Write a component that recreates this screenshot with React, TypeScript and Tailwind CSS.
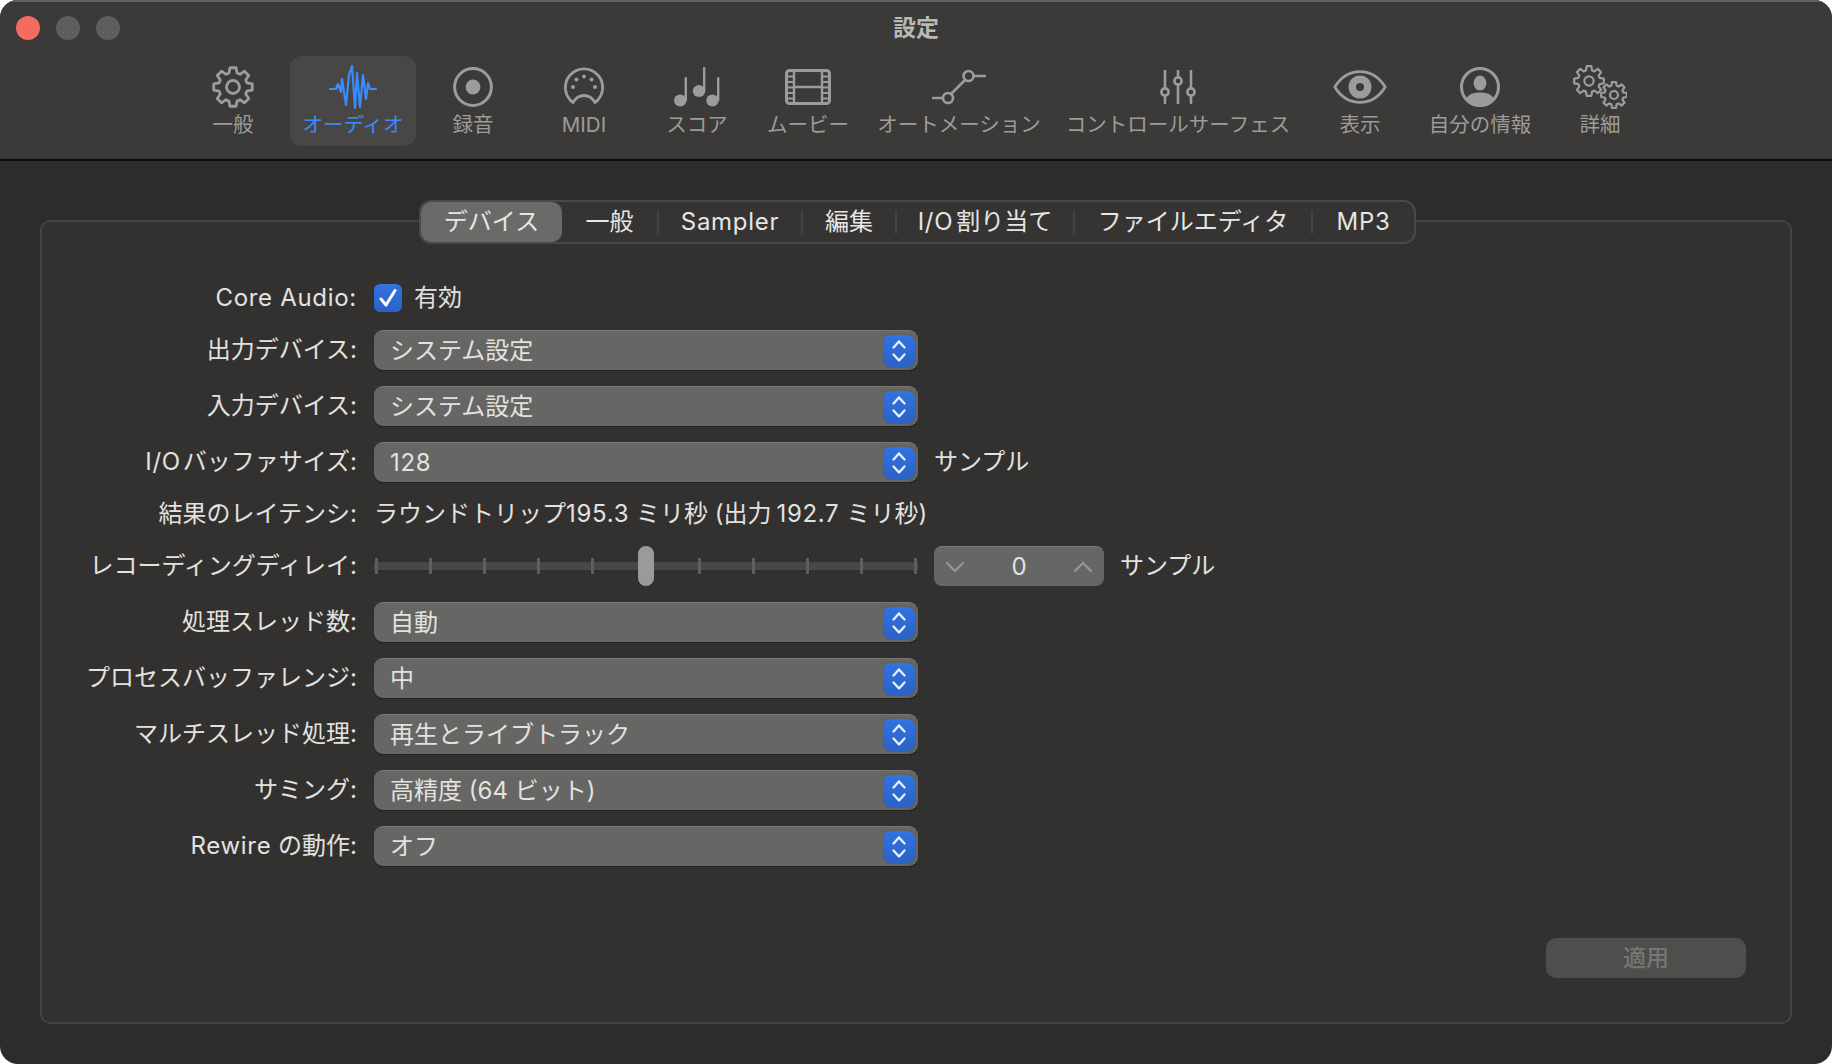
import * as React from "react";

const TOOLBAR_ITEMS = [
  { label: "一般", width: "w-[114px]", icon: <GearIcon /> },
  { label: "オーディオ", width: "w-[126px]", icon: <WaveIcon />, active: true },
  { label: "録音", width: "w-[114px]", icon: <RecordIcon /> },
  { label: "MIDI", width: "w-[108px]", icon: <MidiIcon /> },
  { label: "スコア", width: "w-[118px]", icon: <ScoreIcon /> },
  { label: "ムービー", width: "w-[104px]", icon: <FilmIcon /> },
  { label: "オートメーション", width: "w-[198px]", icon: <AutomationIcon /> },
  { label: "コントロールサーフェス", width: "w-[240px]", icon: <SlidersIcon /> },
  { label: "表示", width: "w-[124px]", icon: <EyeIcon /> },
  { label: "自分の情報", width: "w-[116px]", icon: <UserIcon /> },
  { label: "詳細", width: "w-[124px]", icon: <GearsIcon /> },
];

const TABS = [
  { label: "デバイス", width: "w-[141px] rounded-[10px] bg-[#6a6a68]" },
  { label: "一般", width: "w-[95px]" },
  { label: <Latin>Sampler</Latin>, width: "w-[142px]" },
  { label: "編集", width: "w-[92px]" },
  { label: <><Latin>I/O</Latin><span className="ml-[3px]">割り当て</span></>, width: "w-[176px]" },
  { label: "ファイルエディタ", width: "w-[236px]" },
  { label: <Latin>MP3</Latin>, width: "flex-1" },
];

const TICKS = [0, 1, 2, 3, 4, 5, 6, 7, 8, 9, 10];

// Inter runs a little narrower than the system font in the picture.
function Latin({ children }: { children: React.ReactNode }) {
  return <span className="tracking-[0.7px]">{children}</span>;
}

// Builds a toothed outline around a centre; the macOS gears are all this shape.
function gearPath(cx: number, cy: number, outer: number, inner: number, teeth = 8) {
  const step = (Math.PI * 2) / teeth;
  const pts: string[] = [];
  for (let i = 0; i < teeth; i++) {
    const a = i * step - Math.PI / 2;
    const spots: [number, number][] = [
      [inner, a - step * 0.36],
      [outer, a - step * 0.2],
      [outer, a + step * 0.2],
      [inner, a + step * 0.36],
    ];
    for (const [r, t] of spots) {
      pts.push(`${(cx + Math.cos(t) * r).toFixed(2)} ${(cy + Math.sin(t) * r).toFixed(2)}`);
    }
  }
  return `M${pts.join("L")}Z`;
}

function GearIcon() {
  return (
    <svg viewBox="0 0 42 42" className="h-[42px] w-[42px]" fill="none" stroke="#9c9c9a" strokeWidth="2.8" strokeLinejoin="round">
      <path d={gearPath(21, 21, 19.5, 14.5)} />
      <circle cx="21" cy="21" r="6.5" />
    </svg>
  );
}

function WaveIcon() {
  return (
    <svg viewBox="0 0 48 44" className="h-[44px] w-[48px]" fill="none" stroke="#3a8bfb" strokeWidth="2.2" strokeLinejoin="round" strokeLinecap="round">
      <polyline points="1,24 7,24 9,19 12,27 13,14 17,40 20,10 23,1 26,43 28,8 31,42 34,10 37,34 39,18 41,24 47,24" />
    </svg>
  );
}

function RecordIcon() {
  return (
    <svg viewBox="0 0 40 40" className="h-[40px] w-[40px]">
      <circle cx="20" cy="20" r="18.4" fill="none" stroke="#9c9c9a" strokeWidth="3" />
      <circle cx="20" cy="20" r="7.4" fill="#9c9c9a" />
    </svg>
  );
}

function MidiIcon() {
  return (
    <svg viewBox="0 0 40 40" className="h-[40px] w-[40px]" fill="#9c9c9a">
      <path
        d="M9 35.5A18.6 18.6 0 1 1 31 35.5C29 32 26 28.5 20 28.5C14 28.5 11 32 9 35.5Z"
        fill="none"
        stroke="#9c9c9a"
        strokeWidth="2.8"
        strokeLinejoin="round"
      />
      <circle cx="9" cy="20" r="2" />
      <circle cx="12.5" cy="12.5" r="2" />
      <circle cx="20" cy="9.5" r="2" />
      <circle cx="27.5" cy="12.5" r="2" />
      <circle cx="31" cy="20" r="2" />
    </svg>
  );
}

function ScoreIcon() {
  return (
    <svg viewBox="0 0 46 40" className="h-[40px] w-[46px]" fill="#9c9c9a">
      <ellipse cx="6.2" cy="33.5" rx="6.2" ry="6" />
      <rect x="10.6" y="10" width="2.4" height="24" rx="1" />
      <ellipse cx="25" cy="24" rx="6.2" ry="6" />
      <rect x="29" y="0" width="2.4" height="25" rx="1" />
      <ellipse cx="38.5" cy="33.5" rx="6.2" ry="6" />
      <rect x="43" y="10" width="2.4" height="24" rx="1" />
    </svg>
  );
}

function FilmIcon() {
  return (
    <svg viewBox="0 0 46 36" className="h-[36px] w-[46px]" fill="none" stroke="#9c9c9a">
      <rect x="1.5" y="1.5" width="43" height="33" rx="3" strokeWidth="3" />
      <path d="M9 1.5V34.5M37 1.5V34.5M9 18H37" strokeWidth="2.4" />
      <path d="M2 7.5H9M2 13H9M2 18.5H9M2 24H9M2 29.5H9M37 7.5H44M37 13H44M37 18.5H44M37 24H44M37 29.5H44" strokeWidth="2" />
    </svg>
  );
}

function AutomationIcon() {
  return (
    <svg viewBox="0 0 54 36" className="h-[36px] w-[54px]" fill="none" stroke="#9c9c9a" strokeWidth="2.6" strokeLinecap="round">
      <path d="M1 29H11M19 25L33 11M42 7H53" />
      <circle cx="16" cy="29" r="5" />
      <circle cx="36.5" cy="7" r="5" />
    </svg>
  );
}

function SlidersIcon() {
  return (
    <svg viewBox="0 0 36 34" className="h-[34px] w-[36px]" fill="#3b3a38" stroke="#9c9c9a" strokeWidth="2.6" strokeLinecap="round">
      <path d="M5 1V33M18 1V33M31 1V33" />
      <circle cx="5" cy="22" r="3.6" />
      <circle cx="18" cy="11" r="3.6" />
      <circle cx="31" cy="22" r="3.6" />
    </svg>
  );
}

function EyeIcon() {
  return (
    <svg viewBox="0 0 54 34" className="h-[34px] w-[54px]">
      <path d="M1.8 17C8 7 17 1.6 27 1.6S46 7 52.2 17C46 27 37 32.4 27 32.4S8 27 1.8 17Z" fill="none" stroke="#9c9c9a" strokeWidth="2.8" strokeLinejoin="round" />
      <circle cx="27" cy="17" r="11.5" fill="#9c9c9a" />
      <circle cx="27" cy="17" r="4" fill="#3b3a38" />
    </svg>
  );
}

function UserIcon() {
  return (
    <svg viewBox="0 0 40 40" className="h-[40px] w-[40px]" fill="#9c9c9a">
      <circle cx="20" cy="20" r="18.5" fill="none" stroke="#9c9c9a" strokeWidth="3" />
      <ellipse cx="20" cy="16" rx="6.4" ry="7.6" />
      <path d="M6 31.5C9 27 14 25.5 20 25.5S31 27 34 31.5C30.5 36 25.5 38.4 20 38.4S9.5 36 6 31.5Z" />
    </svg>
  );
}

function GearsIcon() {
  return (
    <svg viewBox="0 0 54 44" className="h-[44px] w-[54px]" fill="none" stroke="#9c9c9a" strokeWidth="2.2" strokeLinejoin="round">
      <path d={gearPath(16, 16, 15, 11)} />
      <circle cx="16" cy="16" r="4.6" />
      <path d={gearPath(41, 30, 13, 9.6)} />
      <circle cx="41" cy="30" r="4" />
    </svg>
  );
}

function Select({ value }: { value: React.ReactNode }) {
  return (
    <div className="flex h-10 w-[544px] items-center justify-between rounded-[9px] border-t border-t-[#787876] bg-[#666664] pl-4 pr-[3px] shadow-[0_1px_1px_rgba(0,0,0,0.35)]">
      <span className="whitespace-nowrap">{value}</span>
      <span className="flex h-8 w-8 items-center justify-center rounded-lg bg-gradient-to-b from-[#3273e0] to-[#2a62c6] shadow-[0_0_1px_rgba(0,0,0,0.6)]">
        <svg viewBox="0 0 16 24" className="h-6 w-4" fill="none" stroke="#e8f0fd" strokeWidth="2.3" strokeLinecap="round" strokeLinejoin="round">
          <path d="M2.5 8.5L8 2.5L13.5 8.5M2.5 15.5L8 21.5L13.5 15.5" />
        </svg>
      </span>
    </div>
  );
}

function Row({ label, children }: { label: React.ReactNode; children: React.ReactNode }) {
  return (
    <div className="flex h-10 items-center">
      <span className="w-[316px] shrink-0 whitespace-nowrap pr-[1px] text-right">{label}</span>
      <div className="ml-4 flex items-center">{children}</div>
    </div>
  );
}

function DelaySlider() {
  return (
    <div className="relative flex h-10 w-[544px] items-center">
      <div className="h-2 w-full bg-[#484745]" />
      <div className="absolute inset-x-0 flex items-center justify-between px-[1px]">
        {TICKS.map((tick) => (
          <span key={tick} className="h-4 w-[3px] bg-[#5f5f5d]" />
        ))}
      </div>
      <span className="absolute left-[264px] h-10 w-4 rounded-lg bg-[#9a9a98]" />
    </div>
  );
}

export default function App() {
  return (
    <div className="h-[1064px] w-[1832px] bg-white font-[Inter,'Noto_Sans_CJK_JP',sans-serif]">
      <div className="flex h-full flex-col overflow-hidden rounded-[18px] bg-[#2d2c2a]">
        <header className="h-[161px] shrink-0 border-t-2 border-b-2 border-t-[#626260] border-b-[#0c0c0c] bg-[#3b3a38]">
          <div className="grid h-[52px] grid-cols-3 items-center">
            <div className="flex gap-4 pl-4">
              <span className="h-6 w-6 rounded-full bg-[#f46b60]" />
              <span className="h-6 w-6 rounded-full bg-[#5f5e5c]" />
              <span className="h-6 w-6 rounded-full bg-[#5f5e5c]" />
            </div>
            <div className="text-center text-[23px] font-semibold text-[#b9b9b7]">設定</div>
          </div>
          <nav className="flex pl-[176px] pt-[2px]">
            {TOOLBAR_ITEMS.map((item) => (
              <div
                key={item.label}
                className={`flex h-[90px] shrink-0 flex-col items-center rounded-xl ${item.width} ${item.active ? "bg-[#484745]" : ""}`}
              >
                <div className="flex h-[54px] items-center justify-center pt-[8px]">{item.icon}</div>
                <span className={`whitespace-nowrap text-[20.5px] leading-[30px] ${item.active ? "text-[#3a8bfb]" : "text-[#9c9c9a]"}`}>
                  {item.label}
                </span>
              </div>
            ))}
          </nav>
        </header>

        <main className="relative flex-1 px-[40px] pb-[40px] pt-[59px]">
          <div className="relative h-full rounded-[10px] border-2 border-[#444341] bg-[#32312f] text-[24px] leading-none text-[#e2e2e0]">
            <div className="absolute -top-[22px] left-[377px] flex h-[44px] w-[997px] items-center rounded-xl border-2 border-[#4a4947] bg-[#353432] text-[#e6e6e4]">
              {TABS.map((tab, index) => (
                <React.Fragment key={index}>
                  {index > 1 && <span className="h-6 w-[2px] shrink-0 bg-[#454442]" />}
                  <span className={`flex h-10 items-center justify-center whitespace-nowrap ${tab.width}`}>
                    {tab.label}
                  </span>
                </React.Fragment>
              ))}
            </div>

            <div className="flex flex-col gap-4 pt-[56px]">
              <div className="-mb-[4px]">
                <Row label={<Latin>Core Audio:</Latin>}>
                  <span className="flex h-7 w-7 items-center justify-center rounded-md bg-gradient-to-b from-[#3273e0] to-[#2a62c6]">
                    <svg viewBox="0 0 20 20" className="h-5 w-5" fill="none" stroke="#ffffff" strokeWidth="3" strokeLinecap="round" strokeLinejoin="round">
                      <path d="M3 11L8 17L17 2.5" />
                    </svg>
                  </span>
                  <span className="ml-[12px]">有効</span>
                </Row>
              </div>
              <Row label="出力デバイス:"><Select value="システム設定" /></Row>
              <Row label="入力デバイス:"><Select value="システム設定" /></Row>
              <Row label={<><Latin>I/O</Latin><span className="ml-[2px]">バッファサイズ:</span></>}>
                <Select value={<Latin>128</Latin>} />
                <span className="ml-4">サンプル</span>
              </Row>
              <div className="-my-[4px]">
                <Row label="結果のレイテンシ:">
                  <span className="whitespace-nowrap">
                    ラウンドトリップ<Latin>195.3</Latin> ミリ秒 (出力<span className="ml-[5px] mr-[7px]"><Latin>192.7</Latin></span>ミリ秒)
                  </span>
                </Row>
              </div>
              <Row label="レコーディングディレイ:">
                <DelaySlider />
                <div className="ml-4 flex h-10 w-[170px] items-center justify-between rounded-lg border-t border-t-[#787876] bg-[#666664] px-[11px]">
                  <svg viewBox="0 0 20 12" className="h-3 w-5" fill="none" stroke="#979795" strokeWidth="2.2" strokeLinecap="round" strokeLinejoin="round">
                    <path d="M2 2L10 10L18 2" />
                  </svg>
                  <span>0</span>
                  <svg viewBox="0 0 20 12" className="h-3 w-5" fill="none" stroke="#979795" strokeWidth="2.2" strokeLinecap="round" strokeLinejoin="round">
                    <path d="M2 10L10 2L18 10" />
                  </svg>
                </div>
                <span className="ml-4">サンプル</span>
              </Row>
              <Row label="処理スレッド数:"><Select value="自動" /></Row>
              <Row label="プロセスバッファレンジ:"><Select value="中" /></Row>
              <Row label="マルチスレッド処理:"><Select value="再生とライブトラック" /></Row>
              <Row label="サミング:"><Select value="高精度 (64 ビット)" /></Row>
              <Row label={<><Latin>Rewire</Latin> の動作:</>}><Select value="オフ" /></Row>
            </div>

            <button className="absolute bottom-[44px] right-[44px] h-10 w-[200px] rounded-[10px] bg-[#4e4e4c] text-[23px] font-medium text-[#767674]">
              適用
            </button>
          </div>
        </main>
      </div>
    </div>
  );
}
